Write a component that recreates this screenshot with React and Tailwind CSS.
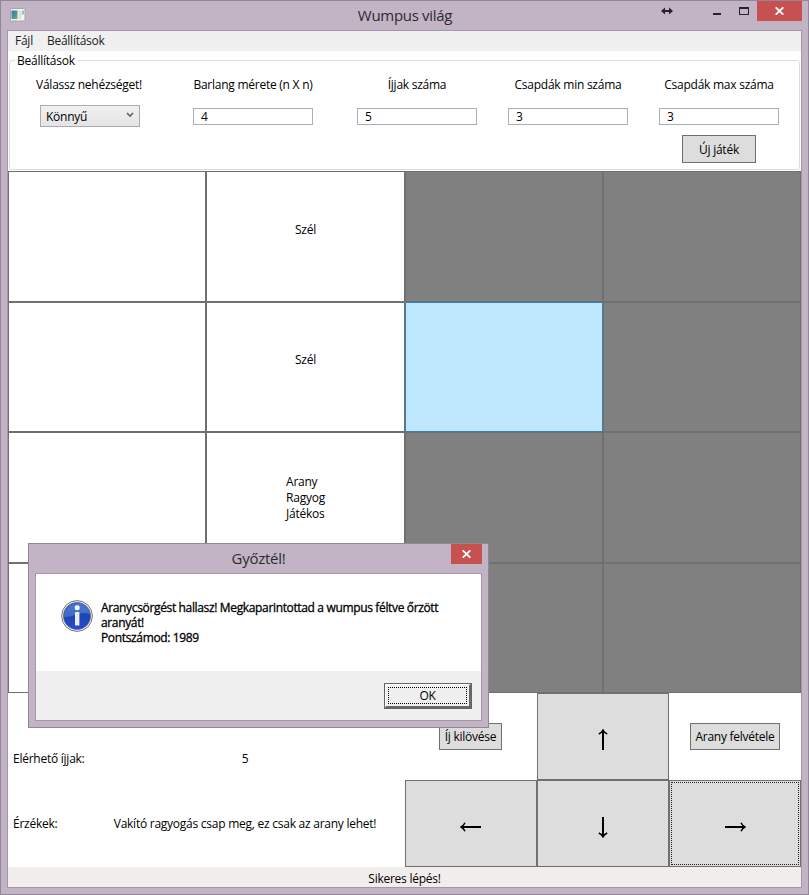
import React from 'react';

const COLS = 'grid-cols-[198px_199px_198px_198px]';

const CELLS = [
  'open', 'wind', 'dark', 'dark',
  'open', 'wind', 'hover', 'dark',
  'open', 'player', 'dark', 'dark',
  'open', 'open', 'dark', 'dark',
];

const CELL_STYLE = {
  open: 'bg-white border-[#707070]',
  wind: 'bg-white border-[#707070]',
  player: 'bg-white border-[#707070]',
  dark: 'bg-[#808080] border-[#707070]',
  hover: 'bg-[#bee6fd] border-[#3c7fb1]',
};

const ARROWS = {
  up: 'rotate-90',
  down: '-rotate-90',
  left: '',
  right: 'rotate-180',
};

function Cell({ kind }) {
  return (
    <div className={`flex items-center justify-center border ${CELL_STYLE[kind]}`}>
      {kind === 'wind' && <span className="mb-[14px]">Szél</span>}
      {kind === 'player' && (
        <div className="leading-4">
          <div>Arany</div>
          <div>Ragyog</div>
          <div>Játékos</div>
        </div>
      )}
    </div>
  );
}

function Arrow({ dir }) {
  return (
    <svg width="22" height="12" viewBox="0 0 22 12" className={ARROWS[dir]} fill="none" stroke="#000">
      <path d="M1.5 6H21" strokeWidth="2" />
      <path d="M5 1.8Q3.6 4.8 1 6Q3.6 7.2 5 10.2" strokeWidth="1.5" />
    </svg>
  );
}

function ArrowButton({ dir, focused }) {
  return (
    <div className="flex border border-[#707070] bg-[#ddd] p-px">
      <div
        className={`flex flex-1 items-center justify-center pt-1.5 ${focused ? 'border border-dotted border-[#222]' : 'border border-transparent'}`}
      >
        <Arrow dir={dir} />
      </div>
    </div>
  );
}

function Field({ label, value, className, children }) {
  return (
    <div className={`flex flex-col items-center ${className}`}>
      <div className="h-4 leading-4 whitespace-nowrap">{label}</div>
      <div className="mt-[12px] flex h-[22px] items-center">
        {children || (
          <div className="mt-px flex h-[17px] w-[120px] items-center border border-[#abadb3] bg-white pl-[7px]">
            {value}
          </div>
        )}
      </div>
    </div>
  );
}

function CloseX() {
  return (
    <svg width="9" height="8" viewBox="0 0 9 8" stroke="#fff" strokeWidth="1.8">
      <path d="M.7.3l7.6 7.4M8.3.3L.7 7.7" />
    </svg>
  );
}

function TitleBar() {
  return (
    <div className="flex h-[29px] shrink-0">
      <div className="flex-1 pt-[7px] pl-[9px]">
        <svg width="16" height="14" viewBox="0 0 16 14">
          <defs>
            <linearGradient id="pane" x1="0" y1="0" x2="1" y2="1">
              <stop offset="0" stopColor="#3d6f9f" />
              <stop offset="1" stopColor="#58b884" />
            </linearGradient>
          </defs>
          <rect x=".5" y=".5" width="14.5" height="12.5" rx=".5" fill="#f4f4f4" stroke="#a7a3a9" />
          <rect x="1.5" y="2.5" width="6" height="8.5" fill="url(#pane)" />
          <rect x="8.5" y="2.5" width="3" height="8.5" fill="#dedede" />
          <rect x="12" y="2.5" width="2" height="4" fill="#8fc9ac" />
        </svg>
      </div>
      <div className="pt-[3px] text-[15px] leading-[22px] tracking-[-0.3px] text-[#2d2a2e]">Wumpus világ</div>
      <div className="flex flex-1 justify-end pr-[6px] pl-[2px]">
        <svg width="12" height="8" viewBox="0 0 12 8" className="mt-[6px] mr-[40px]" fill="#262327">
          <path d="M0 4l4-3.5v2.6h4V.5L12 4 8 7.5V4.9H4v2.6z" />
        </svg>
        <div className="mt-[12px] mr-[18px] h-[2px] w-2 bg-[#262327]" />
        <div className="mt-[6px] mr-[8px] h-2 w-[10px] border border-t-2 border-[#262327]" />
        <div className="flex h-5 w-[45px] items-center justify-center bg-[#c75050]">
          <CloseX />
        </div>
      </div>
    </div>
  );
}

function Settings() {
  return (
    <div className="h-[120px] bg-white px-px pt-px">
      <fieldset className="h-[118px] rounded-[3px] border border-[#d5dfe5]">
        <legend className="ml-[5px] h-[17px] pr-[3px] pl-[2px] leading-[17px]">Beállítások</legend>
        <div className="flex pt-[8px] pl-1">
          <Field label="Válassz nehézséget!" className="w-[150px]">
            <div className="ml-[2px] flex h-[22px] w-[100px] items-center justify-between border border-[#acacac] bg-linear-to-b from-[#f0f0f0] to-[#e5e5e5] pr-[5px] pl-[5px]">
              <span className="pt-px">Könnyű</span>
              <svg width="8" height="6" viewBox="0 0 8 6" fill="none" stroke="#606060" strokeWidth="1.6" className="mb-[2px]">
                <path d="M1 1l3 3 3-3" />
              </svg>
            </div>
          </Field>
          <Field label="Barlang mérete (n X n)" value="4" className="w-[178px]" />
          <Field label="Íjjak száma" value="5" className="w-[150px]" />
          <Field label="Csapdák min száma" value="3" className="w-[152px]" />
          <Field label="Csapdák max száma" value="3" className="w-[150px]" />
        </div>
        <div className="mt-[8px] flex justify-end pr-[43px]">
          <div className="flex h-7 w-[74px] items-center justify-center border border-[#707070] bg-[#ddd] pt-px">Új játék</div>
        </div>
      </fieldset>
    </div>
  );
}

function Controls() {
  return (
    <div className="flex h-[174px] shrink-0 bg-white">
      <div className="w-[397px] pt-[58px] pl-[5px] leading-4">
        <div className="flex">
          <div className="w-[100px]">Elérhető íjjak:</div>
          <div className="w-[264px] text-center">5</div>
        </div>
        <div className="mt-[49px] flex">
          <div className="w-[100px]">Érzékek:</div>
          <div className="w-[264px] text-center whitespace-nowrap">Vakító ragyogás csap meg, ez csak az arany lehet!</div>
        </div>
      </div>
      <div className="grid flex-1 grid-cols-3 grid-rows-2">
        <div className="flex items-center justify-center pr-px">
          <div className="flex h-[27px] w-[63px] items-center justify-center border border-[#707070] bg-[#ddd]">Íj kilövése</div>
        </div>
        <ArrowButton dir="up" />
        <div className="flex items-center justify-center">
          <div className="flex h-[27px] w-[90px] items-center justify-center border border-[#707070] bg-[#ddd]">Arany felvétele</div>
        </div>
        <ArrowButton dir="left" />
        <ArrowButton dir="down" />
        <ArrowButton dir="right" focused />
      </div>
    </div>
  );
}

function InfoIcon() {
  return (
    <svg width="32" height="32" viewBox="0 0 32 32" className="shrink-0">
      <defs>
        <linearGradient id="ball" x1="0" y1="0" x2="0" y2="1">
          <stop offset="0" stopColor="#2f62c4" />
          <stop offset=".5" stopColor="#1c46ae" />
          <stop offset="1" stopColor="#2749dc" />
        </linearGradient>
      </defs>
      <circle cx="16" cy="16" r="15.4" fill="#ededed" stroke="#777" strokeWidth="1" />
      <circle cx="16" cy="16" r="13.6" fill="url(#ball)" stroke="#53627f" strokeWidth=".6" />
      <path d="M2.9 17A13.2 13.2 0 0 1 29 14Q23 12 16 14.5T2.9 17z" fill="#6d97e2" opacity=".45" />
      <circle cx="16.2" cy="7.8" r="2.5" fill="#fff" />
      <rect x="14" y="12" width="4.4" height="13.6" rx=".6" fill="#ececec" />
    </svg>
  );
}

function Dialog() {
  return (
    <div className="absolute top-[542px] left-[27px] flex h-[185px] w-[461px] flex-col border border-[#948699] bg-[#c3b4c5] px-[6px] pb-[6px]">
      <div className="flex h-[29px] shrink-0">
        <div className="flex-1" />
        <div className="pt-[3px] text-[15px] leading-[22px] tracking-[-0.25px] text-[#2d2a2e]">Győztél!</div>
        <div className="flex flex-1 justify-end">
          <div className="flex h-5 w-[31px] items-center justify-center bg-[#c75050]">
            <CloseX />
          </div>
        </div>
      </div>
      <div className="flex flex-1 flex-col border border-[#a696a9]">
        <div className="flex h-[97px] gap-2 bg-white pt-[26px] pl-[25px]">
          <InfoIcon />
          <div className="text-[12px] leading-[15px] tracking-[-0.35px] whitespace-nowrap [-webkit-text-stroke:0.3px_#000]">
            <div>Aranycsörgést hallasz! Megkaparintottad a wumpus féltve őrzött</div>
            <div>aranyát!</div>
            <div>Pontszámod: 1989</div>
          </div>
        </div>
        <div className="flex flex-1 justify-end bg-[#f0f0f0] pt-[12px] pr-[9px]">
          <div className="h-[26px] w-[88px] border border-[#646464] bg-[#f0f0f0]">
            <div className="h-full border-t border-r-2 border-b-2 border-l border-t-white border-r-[#696969] border-b-[#696969] border-l-white p-[2px]">
              <div className="flex h-full items-center justify-center border border-dotted border-black">OK</div>
            </div>
          </div>
        </div>
      </div>
    </div>
  );
}

export default function App() {
  return (
    <div className="relative flex h-[895px] w-[809px] flex-col overflow-hidden border border-[#948699] bg-[#c3b4c5] font-['Open_Sans','Noto_Sans',sans-serif] text-[12px] tracking-[-0.25px] text-black">
      <TitleBar />
      <div className="mx-[6px] mb-[6px] flex flex-1 flex-col border border-[#a696a9]">
        <div className="flex h-5 shrink-0 gap-[14px] bg-[#f0f0f0] pl-[7px] leading-5 text-[#212121]">
          <span>Fájl</span>
          <span>Beállítások</span>
        </div>
        <Settings />
        <div className={`grid h-[522px] shrink-0 grid-rows-[131px_130px_131px_130px] ${COLS}`}>
          {CELLS.map((kind, i) => (
            <Cell key={i} kind={kind} />
          ))}
        </div>
        <Controls />
        <div className="h-5 shrink-0 bg-[#f1eded] text-center leading-[23px]">Sikeres lépés!</div>
      </div>
      <Dialog />
    </div>
  );
}
